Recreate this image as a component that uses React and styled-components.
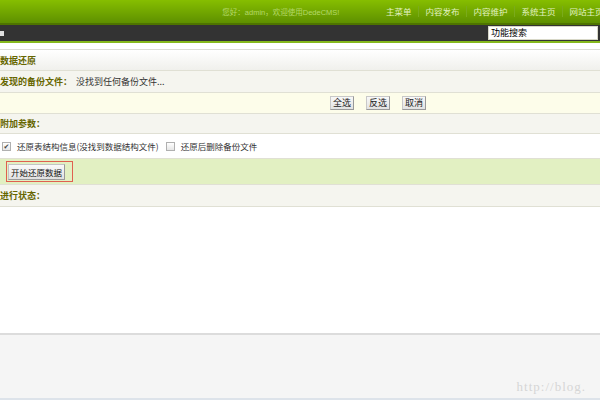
import styled, { createGlobalStyle } from "styled-components";

const Global = createGlobalStyle`
  html, body {
    margin: 0;
    padding: 0;
    background: #ffffff;
  }
  body {
    font-family: "Noto Sans CJK SC", "DejaVu Sans", sans-serif;
    font-size: 9px;
    color: #333333;
  }
`;

const Page = styled.div`
  width: 600px;
  height: 400px;
  display: flex;
  flex-direction: column;
  overflow: hidden;
`;

const TopBar = styled.div`
  height: 23px;
  display: flex;
  align-items: center;
  justify-content: flex-end;
  background: linear-gradient(#86be00, #5e9000);
  border-bottom: 2px solid #4e7400;
  white-space: nowrap;
`;

const Welcome = styled.span`
  color: #b4d86a;
  font-family: "Liberation Sans", "Noto Sans CJK SC", sans-serif;
  font-size: 7.5px;
  margin-right: 40px;
`;

const Menu = styled.div`
  display: flex;
  align-items: center;
`;

const MenuItem = styled.span`
  color: #e2f2c0;
  font-size: 8.5px;
  padding: 0 6.5px;
  border-left: ${({ $first }) => ($first ? "none" : "1px solid #7aab1c")};
  line-height: 11px;
  margin-right: ${({ $last }) => ($last ? "-10px" : "0")};
`;

const DarkBar = styled.div`
  height: 16px;
  display: flex;
  align-items: center;
  justify-content: space-between;
  background: #333333;
  border-bottom: 2px solid #84b81c;
`;

const Square = styled.span`
  width: 4px;
  height: 5px;
  background: #e0e0e0;
  display: block;
`;

const Search = styled.div`
  width: 106px;
  height: 12px;
  background: #ffffff;
  border: 1px solid #d8d8c8;
  margin-right: 2px;
  color: #000000;
  font-size: 9px;
  line-height: 12px;
  padding-left: 2px;
`;

const Gap = styled.div`
  height: 6px;
  background: #ffffff;
  border-bottom: 1px solid #dcdcd4;
`;

const Row = styled.div`
  height: ${({ $h }) => $h}px;
  display: flex;
  align-items: center;
  background: ${({ $bg }) => $bg};
  border-bottom: 1px solid #e0e0d4;
  padding-left: ${({ $pl }) => $pl || 0}px;
  flex-shrink: 0;
`;

const Label = styled.span`
  color: #666600;
  font-weight: bold;
  font-size: 9px;
`;

const Text = styled.span`
  color: #333333;
  font-size: 9px;
  margin-left: ${({ $ml }) => $ml || 0}px;
`;

const Buttons = styled.div`
  display: flex;
  gap: 12px;
  margin-left: 330px;
`;

const SmallButton = styled.span`
  display: inline-block;
  width: 22px;
  height: 12px;
  line-height: 12px;
  text-align: center;
  font-size: 9px;
  color: #222222;
  background: linear-gradient(#f8f8f8, #e2e2e2);
  border: 1px solid #c8c8c8;
  border-right-color: #999999;
  border-bottom-color: #999999;
`;

const CheckLabel = styled.label`
  display: flex;
  align-items: center;
  gap: 6px;
  margin-right: 7px;
  font-size: 8.5px;
  color: #333333;
`;

const Box = styled.span`
  width: 7px;
  height: 7px;
  border: 1px solid #b0b0b0;
  background: linear-gradient(#ffffff, #e6e6e6);
  display: flex;
  align-items: center;
  justify-content: center;
  color: #444444;
  font-size: 7px;
  line-height: 7px;
`;

const Highlight = styled.div`
  border: 1px solid #e06050;
  padding: 2px 7px 1px 1px;
  margin-left: 6px;
  display: flex;
`;

const StartButton = styled.span`
  display: inline-block;
  height: 14px;
  line-height: 14px;
  padding: 0 2px;
  font-size: 8.5px;
  color: #111111;
  background: linear-gradient(#fafafa, #e0e0e0);
  border: 1px solid #c4c4c4;
  border-right-color: #999999;
  border-bottom-color: #999999;
`;

const Main = styled.div`
  flex: 1;
  background: #ffffff;
  border-bottom: 2px solid #dcdcdc;
`;

const Footer = styled.div`
  height: 60px;
  background: #f5f5f5;
  border-bottom: 2px solid #dde3ea;
  display: flex;
  align-items: flex-end;
  justify-content: flex-end;
  padding-bottom: 3px;
`;

const Watermark = styled.span`
  font-family: "Liberation Serif", serif;
  font-size: 13px;
  color: #d6d6d6;
  margin-right: 14px;
  letter-spacing: 1px;
`;

const menu = ["主菜单", "内容发布", "内容维护", "系统主页", "网站主页"];

export default function App() {
  return (
    <Page>
      <Global />
      <TopBar>
        <Welcome>您好：admin，欢迎使用DedeCMS!</Welcome>
        <Menu>
          {menu.map((m, i) => (
            <MenuItem key={m} $first={i === 0} $last={i === menu.length - 1}>
              {m}
            </MenuItem>
          ))}
        </Menu>
      </TopBar>
      <DarkBar>
        <Square />
        <Search>功能搜索</Search>
      </DarkBar>
      <Gap />
      <Row $h={20} $bg="linear-gradient(#ffffff, #f0f0ec)">
        <Label>数据还原</Label>
      </Row>
      <Row $h={21} $bg="#f5f5ef">
        <Label>发现的备份文件：</Label>
        <Text $ml={4}>没找到任何备份文件...</Text>
      </Row>
      <Row $h={20} $bg="#fdfdea">
        <Buttons>
          <SmallButton>全选</SmallButton>
          <SmallButton>反选</SmallButton>
          <SmallButton>取消</SmallButton>
        </Buttons>
      </Row>
      <Row $h={19} $bg="#f5f5ef">
        <Label>附加参数：</Label>
      </Row>
      <Row $h={24} $bg="#ffffff" $pl={2}>
        <CheckLabel>
          <Box>✔</Box>
          还原表结构信息(没找到数据结构文件)
        </CheckLabel>
        <CheckLabel>
          <Box />
          还原后删除备份文件
        </CheckLabel>
      </Row>
      <Row $h={25} $bg="#e2f0c2">
        <Highlight>
          <StartButton>开始还原数据</StartButton>
        </Highlight>
      </Row>
      <Row $h={21} $bg="#f5f5ef">
        <Label>进行状态：</Label>
      </Row>
      <Main />
      <Footer>
        <Watermark>http://blog.</Watermark>
      </Footer>
    </Page>
  );
}
